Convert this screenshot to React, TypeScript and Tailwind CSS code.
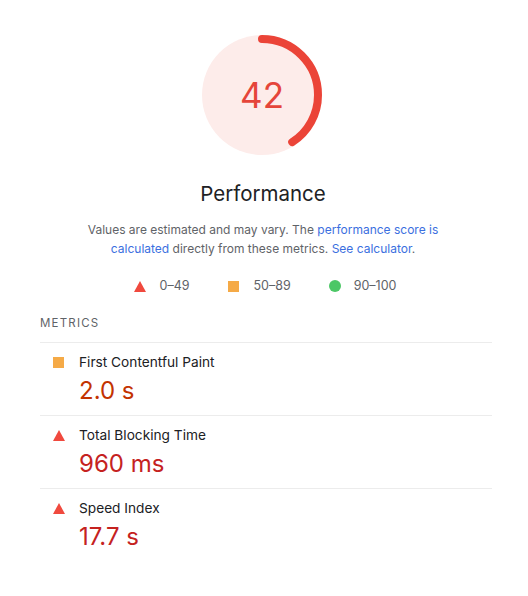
import React from 'react';

type Rating = 'fail' | 'average' | 'pass';

interface Metric {
  label: string;
  value: string;
  rating: Rating;
}

const metrics: Metric[] = [
  { label: 'First Contentful Paint', value: '2.0 s', rating: 'average' },
  { label: 'Total Blocking Time', value: '960 ms', rating: 'fail' },
  { label: 'Speed Index', value: '17.7 s', rating: 'fail' },
];

// Small rating markers, same shapes Lighthouse uses
function Marker({ rating }: { rating: Rating }) {
  if (rating === 'fail') {
    return (
      <svg width="12" height="11" viewBox="0 0 12 11" className="shrink-0">
        <polygon points="6,0 12,11 0,11" fill="#f0493e" />
      </svg>
    );
  }
  if (rating === 'average') {
    return <span className="block w-[11px] h-[11px] bg-[#f5aa47] shrink-0" />;
  }
  return <span className="block w-[12px] h-[12px] rounded-full bg-[#4cc766] shrink-0" />;
}

function Gauge({ score }: { score: number }) {
  const r = 56;
  const c = 2 * Math.PI * r;
  const len = (score / 100) * c - 4;
  return (
    <div className="relative w-[120px] h-[120px] mr-[4px]">
      <svg width="120" height="120" viewBox="0 0 120 120">
        <circle cx="60" cy="60" r="60" fill="#fdecea" />
        <circle
          cx="60"
          cy="60"
          r={r}
          fill="none"
          stroke="#eb4438"
          strokeWidth="8"
          strokeLinecap="round"
          strokeDasharray={`${len} ${c}`}
          transform="rotate(-90 60 60)"
        />
      </svg>
      <div className="absolute inset-0 flex items-center justify-center text-[35px] text-[#e5453a] leading-none">
        {score}
      </div>
    </div>
  );
}

function App() {
  return (
    <div
      className="w-[528px] h-[596px] bg-white text-[#202124]"
      style={{ fontFamily: 'Inter, "Noto Sans", sans-serif' }}
    >
      <div className="flex flex-col items-center pt-[35px]">
        <Gauge score={42} />
        <h2 className="mt-[26px] mr-[2px] text-[20.5px] leading-[26px] text-[#202124]">Performance</h2>
        <p className="mt-[13px] mr-[2px] text-[12px] leading-[19px] text-[#5f6368] text-center">
          Values are estimated and may vary. The{' '}
          <span className="text-[#3b6fe0]">performance score is</span>
          <br />
          <span className="text-[#3b6fe0]">calculated</span> directly from these metrics.{' '}
          <span className="text-[#3b6fe0]">See calculator</span>.
        </p>
        <div className="mt-[19px] flex items-center text-[12.5px] leading-[18px] text-[#5f6368] pl-[2px]">
          <div className="flex items-center gap-[14px]">
            <Marker rating="fail" />
            <span>0–49</span>
          </div>
          <div className="flex items-center gap-[14px] ml-[39px]">
            <Marker rating="average" />
            <span>50–89</span>
          </div>
          <div className="flex items-center gap-[13px] ml-[38px]">
            <Marker rating="pass" />
            <span>90–100</span>
          </div>
        </div>
      </div>

      <div className="ml-[40px] mr-[36px] mt-[20px]">
        <div className="text-[11.5px] leading-[16px] tracking-[1.2px] text-[#5f6368] pb-[11px]">METRICS</div>
        {metrics.map((m) => (
          <div key={m.label} className="border-t border-[#ececec] pl-[13px] pt-[9px] pb-[8px]">
            <div className="flex items-center h-[20px]">
              <div className="w-[26px] flex items-center">
                <Marker rating={m.rating} />
              </div>
              <span className="text-[13.7px] text-[#202124]">{m.label}</span>
            </div>
            <div
              className={`mt-[3px] pl-[26px] text-[24px] leading-[32px] ${
                m.rating === 'fail' ? 'text-[#c5221f]' : 'text-[#c33300]'
              }`}
            >
              {m.value}
            </div>
          </div>
        ))}
      </div>
    </div>
  );
}

export default App;
